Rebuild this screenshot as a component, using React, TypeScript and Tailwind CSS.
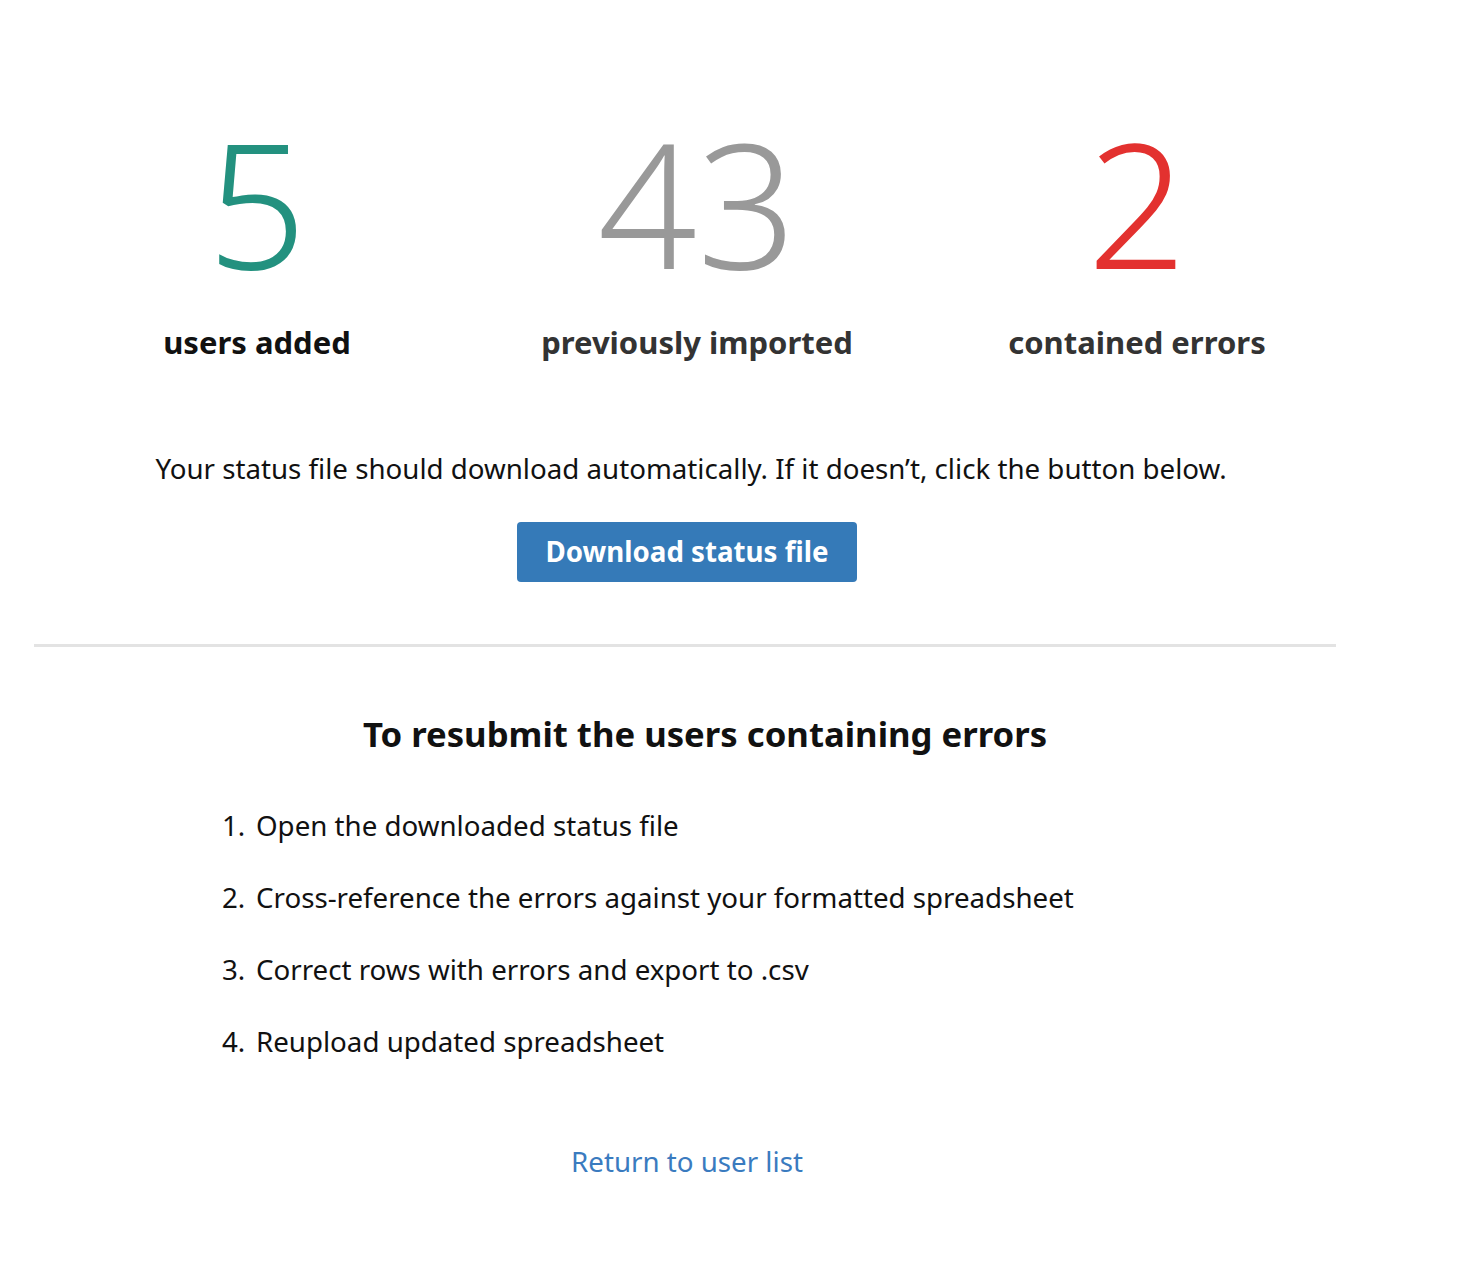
const stats = [
  { value: "5", label: "users added", num: "text-[#23917f]", lab: "text-[#111111]" },
  { value: "43", label: "previously imported", num: "text-[#999999]", lab: "text-[#333333]" },
  { value: "2", label: "contained errors", num: "text-[#e3312f]", lab: "text-[#333333]" }
]

const steps = [
  "Open the downloaded status file",
  "Cross-reference the errors against your formatted spreadsheet",
  "Correct rows with errors and export to .csv",
  "Reupload updated spreadsheet"
]

export default function App() {
  return (
    <div className="min-h-[1288px] w-full bg-white font-['Noto_Sans','Open_Sans',sans-serif]">
      <div className="ml-[37px] grid w-[1320px] grid-cols-3 pt-[92px]">
        {stats.map((s) => (
          <div key={s.label} className="flex flex-col items-center">
            <div className={`text-[174px] font-light leading-[220px] ${s.num}`}>{s.value}</div>
            <div className={`mt-[10px] text-[31px] font-bold leading-[40px] ${s.lab}`}>{s.label}</div>
          </div>
        ))}
      </div>

      <div className="ml-[34px] w-[1302px]">
        <p className="mt-[88px] pl-[12px] text-center text-[27.7px] leading-[36px] text-[#111111]">
          Your status file should download automatically. If it doesn’t, click the button below.
        </p>
        <div className="mt-[36px] flex justify-center pl-[4px]">
          <button className="h-[60px] rounded-[4px] bg-[#357ab8] px-[29px] text-[27.7px] font-bold text-white">
            Download status file
          </button>
        </div>

        <hr className="mt-[62px] border-t-[3px] border-[#e3e3e3]" />

        <h2 className="mt-[63px] pl-[40px] text-center text-[34.7px] font-bold leading-[48px] text-[#111111]">
          To resubmit the users containing errors
        </h2>

        <ol className="ml-[188px] mt-[47px] flex flex-col gap-[32px] text-[27.7px] leading-[40px] text-[#111111]">
          {steps.map((step, i) => (
            <li key={step} className="flex">
              <span className="w-[34px]">{i + 1}.</span>
              <span>{step}</span>
            </li>
          ))}
        </ol>

        <div className="mt-[80px] flex justify-center pl-[4px]">
          <a href="#" className="text-[27.7px] leading-[40px] text-[#3a7bbf]">
            Return to user list
          </a>
        </div>
      </div>
    </div>
  )
}
